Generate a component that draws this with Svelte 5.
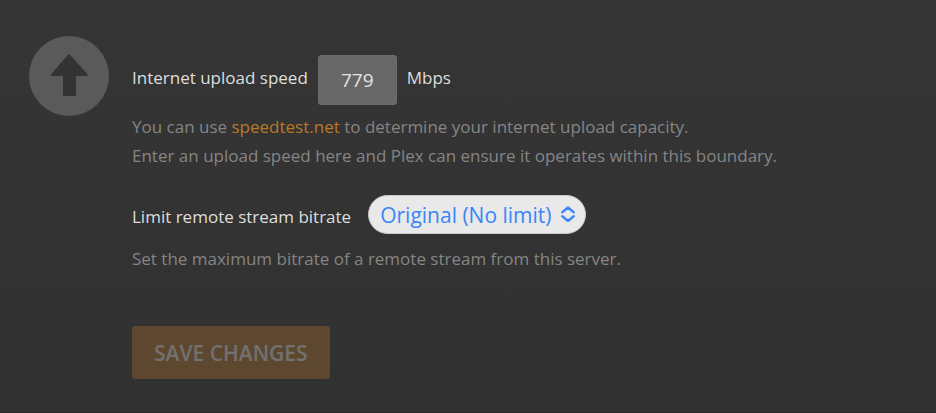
<script>
  let uploadSpeed = $state('779');
  let bitrate = $state('original');
</script>

<main>
  <form onsubmit={(event) => event.preventDefault()}>
    <svg class="upload-icon" viewBox="0 0 80 80" aria-hidden="true">
      <circle cx="40" cy="40" r="40" fill="#5a5a5a" />
      <path
        d="M39 18.800Q40 17.600 41 18.800L58.500 38.200Q59.500 40 58 40H47V58.500Q47 60 45.500 60H35.500Q34 60 34 58.500V40H22.500Q21 40 22 38.200Z"
        fill="#333333"
      />
    </svg>

    <div class="fields">
      <section class="upload">
        <div class="row">
          <label for="speed">Internet upload speed</label>
          <input id="speed" type="text" inputmode="numeric" bind:value={uploadSpeed} />
          <span>Mbps</span>
        </div>
        <p>
          You can use <a href="https://www.speedtest.net">speedtest.net</a> to determine your internet upload capacity.<br />
          Enter an upload speed here and Plex can ensure it operates within this boundary.
        </p>
      </section>

      <section class="limit">
        <div class="row">
          <label for="bitrate">Limit remote stream bitrate</label>
          <div class="picker">
            <select id="bitrate" bind:value={bitrate}>
              <option value="original">Original (No limit)</option>
            </select>
            <svg viewBox="0 0 14 16" aria-hidden="true">
              <path d="M1.200 6.300 7 1.500 12.800 6.300M1.200 10.200 7 15 12.800 10.200" />
            </svg>
          </div>
        </div>
        <p>Set the maximum bitrate of a remote stream from this server.</p>
      </section>

      <button type="submit">SAVE CHANGES</button>
    </div>
  </form>
</main>

<style>
  :global(body) {
    background: #333333;
  }

  main {
    box-sizing: border-box;
    min-height: 100vh;
    padding: 3px 32px 32px 29px;
    background: linear-gradient(#353535, #313131);
    border-bottom: 1px solid #2a2a2a;
    color: #dedede;
    font: 17px/29px 'Open Sans', sans-serif;
  }

  form {
    display: flex;
    gap: 23px;
    padding-top: 32px;
    border-top: 1px solid #313131;
  }

  .upload-icon {
    flex: none;
    width: 80px;
    height: 80px;
  }

  .fields {
    flex: 1;
    padding-top: 19px;
  }

  .row {
    display: flex;
  }

  .upload .row {
    gap: 10px;
    align-items: center;
  }

  .upload label,
  .upload span {
    padding-bottom: 5px;
  }

  .limit .row {
    gap: 17px;
    align-items: baseline;
  }

  .limit {
    margin-top: 25px;
  }

  p {
    margin: 7px 0 0;
    color: #858585;
  }

  .limit p {
    margin-top: 10px;
  }

  a {
    color: #b97a27;
    text-decoration: none;
  }

  input {
    box-sizing: border-box;
    width: 79px;
    height: 50px;
    padding: 0;
    border: 1px solid #6c6c6c;
    border-radius: 3px;
    background: #676767;
    color: #e4e4e4;
    font: 19px 'Open Sans', sans-serif;
    text-align: center;
  }

  .picker {
    position: relative;
  }

  select {
    display: block;
    appearance: none;
    box-sizing: border-box;
    width: 218px;
    height: 39px;
    padding: 0 32px 0 11px;
    border: 1px solid #c9c9c9;
    border-radius: 20px;
    background: #e9e9e9;
    color: #3a86f8;
    font: 21px 'Open Sans', sans-serif;
  }

  .picker svg {
    position: absolute;
    top: 11px;
    right: 11px;
    width: 14px;
    height: 16px;
    fill: none;
    stroke: #3a86f8;
    stroke-width: 2.4;
    stroke-linecap: round;
    stroke-linejoin: round;
    pointer-events: none;
  }

  button {
    display: block;
    height: 53px;
    margin-top: 53px;
    padding: 0 22px;
    border: 0;
    border-radius: 3px;
    background: #5d482f;
    color: #737170;
    font: 600 21px 'Open Sans', sans-serif;
  }
</style>
